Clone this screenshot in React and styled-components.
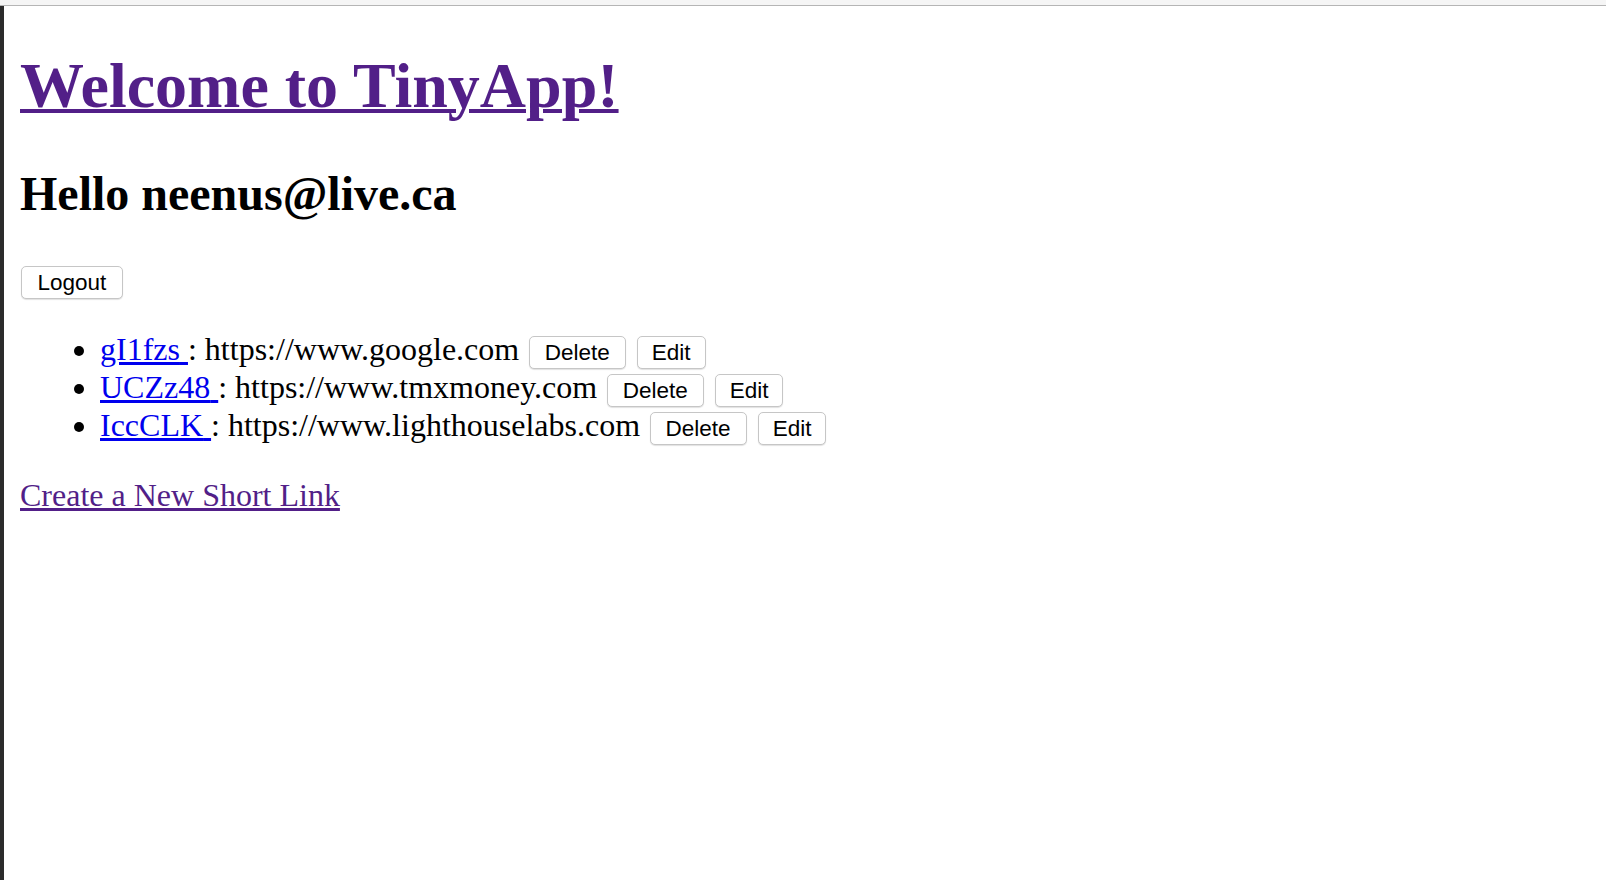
import React from 'react';
import styled, { createGlobalStyle } from 'styled-components';

const GlobalStyle = createGlobalStyle`
  html, body {
    margin: 0;
    padding: 0;
    background: #ffffff;
  }
  body {
    font-family: 'Liberation Serif', 'Times New Roman', serif;
    font-size: 32px;
    color: #000;
  }
`;

const Window = styled.div`
  display: flex;
  flex-direction: column;
  min-height: 100vh;
`;

const TopBar = styled.div`
  height: 5px;
  background: #f5f5f5;
  border-bottom: 1px solid #b5b5b5;
`;

const Viewport = styled.div`
  flex: 1;
  display: flex;
`;

const LeftEdge = styled.div`
  width: 4px;
  background: #2b2b2b;
`;

const Page = styled.main`
  flex: 1;
  padding: 0 16px;
`;

const Title = styled.h1`
  font-size: 64px;
  font-weight: bold;
  margin: 43px 0;

  a {
    color: #521f88;
    text-decoration-thickness: 4px;
  }
`;

const Greeting = styled.h2`
  font-size: 48px;
  font-weight: bold;
  margin: 40px 0;
`;

const LogoutForm = styled.form`
  margin: 0;
`;

const Button = styled.button`
  font-family: 'Liberation Sans', Arial, sans-serif;
  font-size: 22.5px;
  line-height: 25px;
  color: #000;
  background: #ffffff;
  border: 1px solid #c6c6c6;
  border-radius: 5px;
  box-shadow: 0 1px 1px rgba(0, 0, 0, 0.12);
  padding: 3px ${(props) => props.pad || 15}px;
  margin: ${(props) => props.margin || '0 1.5px'};
  cursor: pointer;
`;

const UrlList = styled.ul`
  margin: 32px 0;
  padding-left: 80px;
  list-style: disc;
`;

const UrlItem = styled.li`
  font-size: 32px;
`;

const ShortLink = styled.a`
  color: #0000ee;
  text-decoration: underline;
`;

const CreateLink = styled.a`
  color: #521f88;
  font-size: 32px;
  text-decoration: underline;
`;

const urls = [
  { id: 'gI1fzs', long: 'https://www.google.com' },
  { id: 'UCZz48', long: 'https://www.tmxmoney.com' },
  { id: 'IccCLK', long: 'https://www.lighthouselabs.com' },
];

const App = () => {
  return (
    <>
      <GlobalStyle />
      <Window>
        <TopBar />
        <Viewport>
          <LeftEdge />
          <Page>
            <Title>
              <a href="#urls">Welcome to TinyApp!</a>
            </Title>
            <Greeting>Hello neenus@live.ca</Greeting>
            <LogoutForm onSubmit={(e) => e.preventDefault()}>
              <Button type="submit" pad={16} margin="0 0 0 0.5px">
                Logout
              </Button>
            </LogoutForm>
            <UrlList>
              {urls.map((url) => (
                <UrlItem key={url.id}>
                  <ShortLink href={`#u/${url.id}`}>{url.id} </ShortLink>: {url.long}{' '}
                  <Button type="button">Delete</Button>{' '}
                  <Button type="button" pad={14}>Edit</Button>
                </UrlItem>
              ))}
            </UrlList>
            <CreateLink href="#urls/new">Create a New Short Link</CreateLink>
          </Page>
        </Viewport>
      </Window>
    </>
  );
};

export default App;
